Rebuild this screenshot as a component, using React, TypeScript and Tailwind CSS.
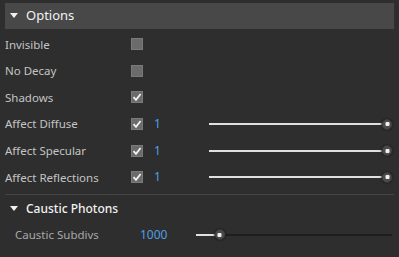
import { ReactNode } from "react";

const font = { fontFamily: '"Noto Sans", "Open Sans", sans-serif' };

function Check({ checked }: { checked?: boolean }) {
  return (
    <div className="w-[12px] h-[12px] bg-[#6b6b6b] border border-[#7a7a7a] flex items-center justify-center">
      {checked && (
        <svg width="10" height="10" viewBox="0 0 10 10">
          <path d="M1.5 5.2 L4 7.8 L8.6 2" stroke="#f2f2f2" strokeWidth="1.8" fill="none" />
        </svg>
      )}
    </div>
  );
}

function Slider({ pct, full }: { pct: number; full?: boolean }) {
  return (
    <div className="relative flex-1 h-[12px] flex items-center">
      <div className={`w-full h-[2px] ${full ? "bg-[#e0e0e0]" : "bg-[#1e1e1e]"}`} />
      <div className="absolute left-0 h-[2px] bg-[#e0e0e0]" style={{ width: `${pct}%` }} />
      <div
        className="absolute w-[11px] h-[11px] rounded-full bg-[#4a4a4a] border border-[#3a3a3a] shadow-[0_0_2px_#111] flex items-center justify-center -translate-x-1/2"
        style={{ left: `${pct}%` }}
      >
        <div className="w-[4px] h-[4px] bg-[#f0f0f0] rounded-[1px]" />
      </div>
    </div>
  );
}

function Row({ label, children }: { label: string; children?: ReactNode }) {
  return (
    <div className="flex items-center h-[26.6px] pl-[5px]">
      <span className="w-[126px] text-[11.5px] text-[#c4c4c4]">{label}</span>
      {children}
    </div>
  );
}

function Triangle() {
  return (
    <svg width="8" height="6" viewBox="0 0 8 6" className="mr-[8px]">
      <path d="M0 0 L8 0 L4 5 Z" fill="#f0f0f0" />
    </svg>
  );
}

export default function App() {
  return (
    <div className="w-[399px] h-[257px] bg-[#2e2e2e] pt-[3px] overflow-hidden" style={font}>
      <div className="mx-[5px] h-[26px] bg-[#484848] flex items-center pl-[5px]">
        <Triangle />
        <span className="text-[13px] text-[#f2f2f2]">Options</span>
      </div>
      <div className="pt-[2px]">
        <Row label="Invisible">
          <Check />
        </Row>
        <Row label="No Decay">
          <Check />
        </Row>
        <Row label="Shadows">
          <Check checked />
        </Row>
        {["Affect Diffuse", "Affect Specular", "Affect Reflections"].map((l) => (
          <Row key={l} label={l}>
            <Check checked />
            <span className="ml-[11px] w-[55px] text-[12px] text-[#4f9fe3]">1</span>
            <div className="flex-1 flex pr-[12px]">
              <Slider pct={100} full />
            </div>
          </Row>
        ))}
      </div>
      <div className="mx-[5px] mt-[3px] border-t border-[#454545]" />
      <div className="h-[28px] flex items-center pl-[10px]">
        <Triangle />
        <span className="text-[12px] text-[#f2f2f2] font-medium">Caustic Photons</span>
      </div>
      <div className="flex items-center h-[24px] pl-[15px]">
        <span className="w-[125px] text-[11.5px] text-[#a8a8a8]">Caustic Subdivs</span>
        <span className="w-[56px] text-[12px] text-[#4f9fe3]">1000</span>
        <div className="flex-1 flex pr-[7px]">
          <Slider pct={12} />
        </div>
      </div>
    </div>
  );
}
